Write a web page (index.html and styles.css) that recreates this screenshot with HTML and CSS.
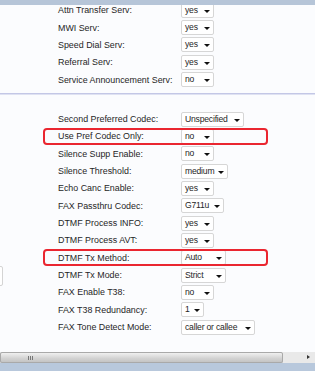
FILE: index.html
```html
<!DOCTYPE html>
<html>
<head>
    <title>Line Settings</title>
    <link rel="stylesheet" href="styles.css">
</head>
<body>
    <div class="topbar"></div>
    <div class="side-box"></div>

    <div class="content">
        <div class="section first">
            <div class="row"><span class="label">Attn Transfer Serv:</span><span class="sel w33">yes</span></div>
            <div class="row"><span class="label">MWI Serv:</span><span class="sel w33">yes</span></div>
            <div class="row"><span class="label">Speed Dial Serv:</span><span class="sel w33">yes</span></div>
            <div class="row"><span class="label">Referral Serv:</span><span class="sel w33">yes</span></div>
            <div class="row"><span class="label">Service Announcement Serv:</span><span class="sel w33">no</span></div>
        </div>

        <div class="divider"></div>

        <div class="section second">
            <div class="row"><span class="label">Second Preferred Codec:</span><span class="sel w63">Unspecified</span></div>
            <div class="row marked"><span class="label">Use Pref Codec Only:</span><span class="sel w33">no</span></div>
            <div class="row"><span class="label">Silence Supp Enable:</span><span class="sel w33">no</span></div>
            <div class="row"><span class="label">Silence Threshold:</span><span class="sel w47">medium</span></div>
            <div class="row"><span class="label">Echo Canc Enable:</span><span class="sel w33">yes</span></div>
            <div class="row"><span class="label">FAX Passthru Codec:</span><span class="sel w43">G711u</span></div>
            <div class="row"><span class="label">DTMF Process INFO:</span><span class="sel w33">yes</span></div>
            <div class="row"><span class="label">DTMF Process AVT:</span><span class="sel w33">yes</span></div>
            <div class="row marked"><span class="label">DTMF Tx Method:</span><span class="sel w45">Auto</span></div>
            <div class="row"><span class="label">DTMF Tx Mode:</span><span class="sel w45">Strict</span></div>
            <div class="row"><span class="label">FAX Enable T38:</span><span class="sel w33">no</span></div>
            <div class="row"><span class="label">FAX T38 Redundancy:</span><span class="sel w23">1</span></div>
            <div class="row"><span class="label">FAX Tone Detect Mode:</span><span class="sel w74">caller or callee</span></div>
        </div>
    </div>

    <div class="hscroll">
        <div class="thumb"><span class="grip"></span></div>
        <div class="track"><span class="arrow"></span></div>
    </div>
    <div class="bottombar"></div>
</body>
</html>
```

FILE: styles.css
```css
html, body {
    margin: 0;
    padding: 0;
}

body {
    width: 315px;
    height: 371px;
    overflow: hidden;
    position: relative;
    display: flex;
    flex-direction: column;
    background-color: #fbfcfe;
    font-family: 'Liberation Sans', Arial, sans-serif;
    font-size: 8.9px;
    color: #262626;
}

/* header band lies over the scrolled content */
.topbar {
    position: absolute;
    top: 0;
    left: 0;
    right: 0;
    height: 5px;
    background-color: #b6c5d8;
    z-index: 2;
}

/* edge of another panel peeking in from the left */
.side-box {
    position: absolute;
    top: 266px;
    left: -20px;
    width: 21px;
    height: 18px;
    border: 1px solid #d4d4d4;
    border-radius: 2px;
    background-color: #fff;
}

.content {
    flex: 1;
}

.section {
    padding-left: 58px;
}

.section.first {
    padding-top: 1.6px;
}

.section.second {
    padding-top: 15.8px;
}

.divider {
    margin-top: 4.4px;
    border-top: 1px solid #c3c7e6;
    border-bottom: 1px solid #dfe2f2;
}

.row {
    position: relative;
    height: 17.33px;
    display: flex;
    align-items: center;
}

.label {
    width: 123px;
    flex-shrink: 0;
    white-space: nowrap;
}

.sel {
    position: relative;
    box-sizing: border-box;
    height: 15px;
    line-height: 13px;
    padding-left: 3px;
    border: 1px solid #d6d6d6;
    border-radius: 2px;
    background-color: #fff;
    white-space: nowrap;
    font-size: 8.6px;
    letter-spacing: -0.2px;
}

.sel:after {
    content: "";
    position: absolute;
    right: 3px;
    top: 6px;
    border-left: 3px solid transparent;
    border-right: 3px solid transparent;
    border-top: 3px solid #111;
}

.w23 { width: 23px; }
.w33 { width: 33px; }
.w43 { width: 43px; }
.w45 { width: 45px; }
.w47 { width: 47px; }
.w63 { width: 63px; }
.w74 { width: 74px; }

/* red annotation frame */
.row.marked:after {
    content: "";
    position: absolute;
    left: -15px;
    top: 0;
    width: 225px;
    height: 17px;
    box-sizing: border-box;
    border: 2px solid #ea2630;
    border-radius: 4px;
}

.hscroll {
    height: 11px;
    display: flex;
    background: linear-gradient(#e4e4e4, #cdcdcd);
}

.thumb {
    width: 283px;
    box-sizing: border-box;
    border: 1px solid #a9a9a9;
    border-radius: 2px;
    background: linear-gradient(#f0f0f0, #d2d2d2 60%, #c4c4c4);
    position: relative;
}

.grip {
    position: absolute;
    left: 27px;
    top: 3px;
    width: 5px;
    height: 4px;
    background: repeating-linear-gradient(90deg, #777 0, #777 1px, transparent 1px, transparent 2px);
}

.track {
    flex: 1;
    position: relative;
    background-color: #e9e9e9;
    background-image: radial-gradient(#d3d3d3 0.5px, transparent 0.6px);
    background-size: 2px 2px;
}

.arrow {
    position: absolute;
    right: 5px;
    top: 3px;
    border-top: 2.5px solid transparent;
    border-bottom: 2.5px solid transparent;
    border-left: 3px solid #333;
}

.bottombar {
    height: 8px;
    background-color: #b8c8dc;
}
```
